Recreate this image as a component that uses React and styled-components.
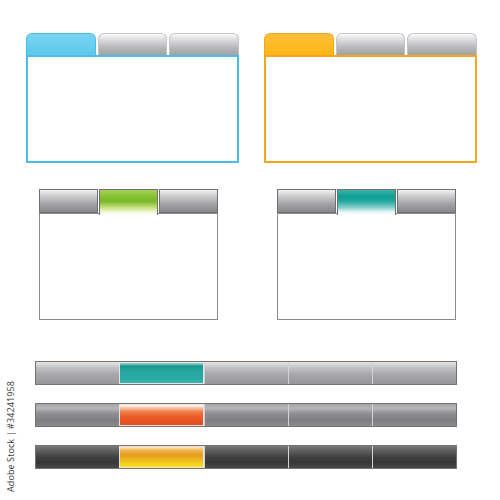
import React from "react";
import styled, { createGlobalStyle, css } from "styled-components";

const GlobalStyle = createGlobalStyle`
  html, body {
    margin: 0;
    padding: 0;
    background: #ffffff;
    font-family: "Open Sans", "Liberation Sans", sans-serif;
  }
`;

const Page = styled.div`
  position: relative;
  width: 500px;
  height: 500px;
  background: #ffffff;
  overflow: hidden;
  display: flex;
  flex-direction: column;
`;

const Credit = styled.span`
  position: absolute;
  left: 4px;
  bottom: 8px;
  writing-mode: vertical-rl;
  transform: rotate(180deg);
  font-size: 9px;
  color: #3a3a3a;
  white-space: nowrap;
  letter-spacing: 0.1px;
`;

/* ---------- rounded folder cards (top row) ---------- */

const FolderRow = styled.div`
  display: flex;
  gap: 25px;
  padding: 33px 0 0 26px;
`;

const Folder = styled.div`
  width: 213px;
  display: flex;
  flex-direction: column;
`;

const RoundTabs = styled.div`
  display: flex;
  gap: 2px;
  height: 22px;
`;

const grayTab = css`
  border: 1px solid #c4c4c6;
  background: linear-gradient(#fbfbfb 0%, #d9d9db 30%, #b4b4b7 70%, #a3a3a6 100%);
`;

const RoundTab = styled.div`
  flex: 1;
  box-sizing: border-box;
  border-radius: 6px 6px 0 0;
  border-bottom: none !important;
  ${({ $fill, $edge }) =>
    $fill
      ? css`
          border: 1px solid ${$edge};
          background: ${$fill};
        `
      : grayTab}
`;

const FolderBody = styled.div`
  box-sizing: border-box;
  height: 108px;
  border: 2px solid ${({ $edge }) => $edge};
  background: #ffffff;
`;

/* ---------- square tab panels (middle row) ---------- */

const PanelRow = styled.div`
  display: flex;
  gap: 59px;
  padding: 26px 0 0 39px;
`;

const Panel = styled.div`
  width: 179px;
  display: flex;
  flex-direction: column;
`;

const SquareTabs = styled.div`
  display: flex;
  gap: 1px;
  height: 24px;
  align-items: stretch;
`;

const SquareTab = styled.div`
  flex: 1;
  box-sizing: border-box;
  border: 1px solid #707072;
  background: linear-gradient(#f2f2f2 0%, #cfcfd1 25%, #a2a2a5 65%, #88888c 100%);
  ${({ $glow }) =>
    $glow &&
    css`
      position: relative;
      z-index: 1;
      height: 26px;
      border-bottom: none;
      background: ${$glow};
    `}
`;

const PanelBody = styled.div`
  box-sizing: border-box;
  height: 107px;
  border: 1px solid #8a8a8c;
  background: #ffffff;
`;

/* ---------- segmented bars (bottom) ---------- */

const BarStack = styled.div`
  display: flex;
  flex-direction: column;
  gap: 18px;
  padding: 41px 0 0 35px;
`;

const Bar = styled.div`
  width: 422px;
  height: 24px;
  box-sizing: border-box;
  display: flex;
  border: 1px solid #7d716c;
  background: ${({ $tone }) => $tone};
`;

const Segment = styled.div`
  flex: 1;
  box-sizing: border-box;
  border-left: 1px solid #d4d4d6;
  &:first-child {
    border-left: none;
  }
  ${({ $fill }) =>
    $fill &&
    css`
      border: 1px solid #e4e4e4;
      background: ${$fill};
    `}
`;

const greenGlow =
  "linear-gradient(#a9d35a 0%, #86c232 25%, #7ab829 45%, #c5e07c 70%, #f3f8d6 88%, #ffffff 100%)";
const tealGlow =
  "linear-gradient(#3fb3a9 0%, #0f9e92 25%, #23a89f 45%, #86cfcb 70%, #e6f6f6 88%, #ffffff 100%)";

const bars = [
  {
    tone: "linear-gradient(#e6e6e7 0%, #c3c3c5 25%, #a9a9ac 55%, #96969a 100%)",
    active: "linear-gradient(#a9d9d5 0%, #18978b 15%, #27a7a2 45%, #2aaaa6 80%, #38b2ae 100%)",
  },
  {
    tone: "linear-gradient(#a3a3a6 0%, #b7b7ba 18%, #8e8e92 45%, #7f7f83 75%, #8a8a8e 100%)",
    active: "linear-gradient(#ffffff 0%, #f8c7a8 14%, #ef7a45 35%, #ea5a27 60%, #e64d1c 100%)",
  },
  {
    tone: "linear-gradient(#7a7a7a 0%, #5e5e5f 22%, #414142 50%, #363637 75%, #4a4a4b 100%)",
    active: "linear-gradient(#fbe3c0 0%, #f0b34a 18%, #e59d1f 40%, #f0c11c 70%, #fbe21b 100%)",
  },
];

const folders = [
  { fill: "linear-gradient(#7ad4f0, #5ac9ec)", edge: "#4bbce3" },
  { fill: "linear-gradient(#ffc03a, #fdb515)", edge: "#f9a51a" },
];

export default function App() {
  return (
    <Page>
      <GlobalStyle />

      <FolderRow>
        {folders.map((f, i) => (
          <Folder key={i}>
            <RoundTabs>
              <RoundTab $fill={f.fill} $edge={f.edge} />
              <RoundTab />
              <RoundTab />
            </RoundTabs>
            <FolderBody $edge={f.edge} />
          </Folder>
        ))}
      </FolderRow>

      <PanelRow>
        {[greenGlow, tealGlow].map((glow, i) => (
          <Panel key={i}>
            <SquareTabs>
              <SquareTab />
              <SquareTab $glow={glow} />
              <SquareTab />
            </SquareTabs>
            <PanelBody />
          </Panel>
        ))}
      </PanelRow>

      <BarStack>
        {bars.map((b, i) => (
          <Bar key={i} $tone={b.tone}>
            <Segment />
            <Segment $fill={b.active} />
            <Segment />
            <Segment />
            <Segment />
          </Bar>
        ))}
      </BarStack>

      <Credit>Adobe Stock | #34241958</Credit>
    </Page>
  );
}
